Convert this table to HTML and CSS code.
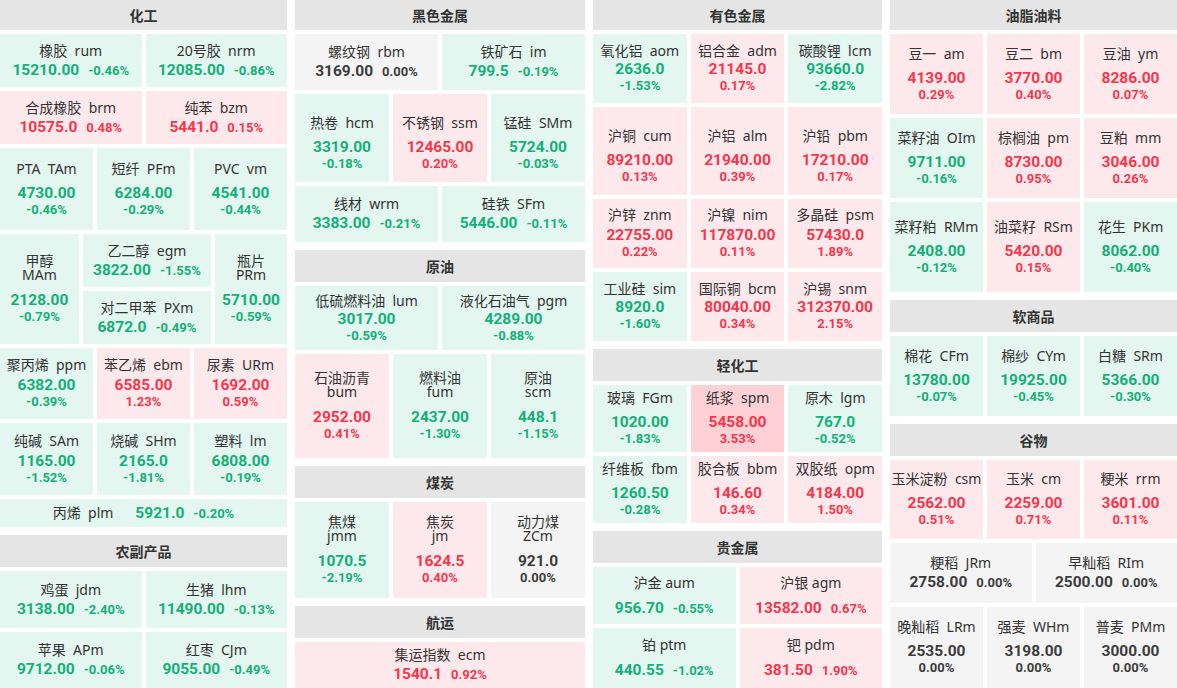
FILE: index.html
```html
<!DOCTYPE html>
<html lang="zh-CN">
<head>
<meta charset="utf-8">
<title>期货板块行情</title>
<link rel="stylesheet" href="styles.css">
</head>
<body>
<div class="board">

  <!-- Column 1 -->
  <div class="col">
    <section class="sec">
      <div class="hd first">化工</div>
      <div class="row h53">
        <div class="tile g w"><div class="nm">橡胶  rum</div><div class="vl"><span class="px">15210.00</span><span class="pc">-0.46%</span></div></div>
        <div class="tile g w"><div class="nm">20号胶  nrm</div><div class="vl"><span class="px">12085.00</span><span class="pc">-0.86%</span></div></div>
      </div>
      <div class="row h53">
        <div class="tile r w"><div class="nm">合成橡胶  brm</div><div class="vl"><span class="px">10575.0</span><span class="pc">0.48%</span></div></div>
        <div class="tile r w"><div class="nm">纯苯  bzm</div><div class="vl"><span class="px">5441.0</span><span class="pc">0.15%</span></div></div>
      </div>
      <div class="row h82">
        <div class="tile g sp"><div class="nm">PTA  TAm</div><div class="vl"><span class="px">4730.00</span><span class="pc">-0.46%</span></div></div>
        <div class="tile g sp"><div class="nm">短纤  PFm</div><div class="vl"><span class="px">6284.00</span><span class="pc">-0.29%</span></div></div>
        <div class="tile g sp"><div class="nm">PVC  vm</div><div class="vl"><span class="px">4541.00</span><span class="pc">-0.44%</span></div></div>
      </div>
      <div class="row h110">
        <div class="tile g sp two f77"><div class="nm">甲醇 MAm</div><div class="vl"><span class="px">2128.00</span><span class="pc">-0.79%</span></div></div>
        <div class="stack f132">
          <div class="tile g w"><div class="nm">乙二醇  egm</div><div class="vl"><span class="px">3822.00</span><span class="pc">-1.55%</span></div></div>
          <div class="tile g w"><div class="nm">对二甲苯  PXm</div><div class="vl"><span class="px">6872.0</span><span class="pc">-0.49%</span></div></div>
        </div>
        <div class="tile g sp two f70"><div class="nm">瓶片 PRm</div><div class="vl"><span class="px">5710.00</span><span class="pc">-0.59%</span></div></div>
      </div>
      <div class="row h71">
        <div class="tile g sm"><div class="nm">聚丙烯  ppm</div><div class="vl"><span class="px">6382.00</span><span class="pc">-0.39%</span></div></div>
        <div class="tile r sm"><div class="nm">苯乙烯  ebm</div><div class="vl"><span class="px">6585.00</span><span class="pc">1.23%</span></div></div>
        <div class="tile r sm"><div class="nm">尿素  URm</div><div class="vl"><span class="px">1692.00</span><span class="pc">0.59%</span></div></div>
      </div>
      <div class="row h72">
        <div class="tile g sm"><div class="nm">纯碱  SAm</div><div class="vl"><span class="px">1165.00</span><span class="pc">-1.52%</span></div></div>
        <div class="tile g sm"><div class="nm">烧碱  SHm</div><div class="vl"><span class="px">2165.0</span><span class="pc">-1.81%</span></div></div>
        <div class="tile g sm"><div class="nm">塑料  lm</div><div class="vl"><span class="px">6808.00</span><span class="pc">-0.19%</span></div></div>
      </div>
      <div class="row h28">
        <div class="tile g line"><div class="nm">丙烯  plm</div><div class="vl"><span class="px">5921.0</span><span class="pc">-0.20%</span></div></div>
      </div>
    </section>
    <section class="sec">
      <div class="hd">农副产品</div>
      <div class="row h57">
        <div class="tile g w"><div class="nm">鸡蛋  jdm</div><div class="vl"><span class="px">3138.00</span><span class="pc">-2.40%</span></div></div>
        <div class="tile g w"><div class="nm">生猪  lhm</div><div class="vl"><span class="px">11490.00</span><span class="pc">-0.13%</span></div></div>
      </div>
      <div class="row h56">
        <div class="tile g w"><div class="nm">苹果  APm</div><div class="vl"><span class="px">9712.00</span><span class="pc">-0.06%</span></div></div>
        <div class="tile g w"><div class="nm">红枣  CJm</div><div class="vl"><span class="px">9055.00</span><span class="pc">-0.49%</span></div></div>
      </div>
    </section>
  </div>

  <!-- Column 2 -->
  <div class="col">
    <section class="sec">
      <div class="hd first">黑色金属</div>
      <div class="row h56">
        <div class="tile n w"><div class="nm">螺纹钢  rbm</div><div class="vl"><span class="px">3169.00</span><span class="pc">0.00%</span></div></div>
        <div class="tile g w"><div class="nm">铁矿石  im</div><div class="vl"><span class="px">799.5</span><span class="pc">-0.19%</span></div></div>
      </div>
      <div class="row h88">
        <div class="tile g sp lo"><div class="nm">热卷  hcm</div><div class="vl"><span class="px">3319.00</span><span class="pc">-0.18%</span></div></div>
        <div class="tile r sp lo"><div class="nm">不锈钢  ssm</div><div class="vl"><span class="px">12465.00</span><span class="pc">0.20%</span></div></div>
        <div class="tile g sp lo"><div class="nm">锰硅  SMm</div><div class="vl"><span class="px">5724.00</span><span class="pc">-0.03%</span></div></div>
      </div>
      <div class="row h56">
        <div class="tile g w"><div class="nm">线材  wrm</div><div class="vl"><span class="px">3383.00</span><span class="pc">-0.21%</span></div></div>
        <div class="tile g w"><div class="nm">硅铁  SFm</div><div class="vl"><span class="px">5446.00</span><span class="pc">-0.11%</span></div></div>
      </div>
    </section>
    <section class="sec">
      <div class="hd">原油</div>
      <div class="row h64">
        <div class="tile g"><div class="nm">低硫燃料油  lum</div><div class="vl"><span class="px">3017.00</span><span class="pc">-0.59%</span></div></div>
        <div class="tile g"><div class="nm">液化石油气  pgm</div><div class="vl"><span class="px">4289.00</span><span class="pc">-0.88%</span></div></div>
      </div>
      <div class="row h104">
        <div class="tile r sp two"><div class="nm">石油沥青 bum</div><div class="vl"><span class="px">2952.00</span><span class="pc">0.41%</span></div></div>
        <div class="tile g sp two"><div class="nm">燃料油 fum</div><div class="vl"><span class="px">2437.00</span><span class="pc">-1.30%</span></div></div>
        <div class="tile g sp two"><div class="nm">原油 scm</div><div class="vl"><span class="px">448.1</span><span class="pc">-1.15%</span></div></div>
      </div>
    </section>
    <section class="sec">
      <div class="hd">煤炭</div>
      <div class="row h96">
        <div class="tile g sp two"><div class="nm">焦煤 jmm</div><div class="vl"><span class="px">1070.5</span><span class="pc">-2.19%</span></div></div>
        <div class="tile r sp two"><div class="nm">焦炭 jm</div><div class="vl"><span class="px">1624.5</span><span class="pc">0.40%</span></div></div>
        <div class="tile n sp two"><div class="nm">动力煤 ZCm</div><div class="vl"><span class="px">921.0</span><span class="pc">0.00%</span></div></div>
      </div>
    </section>
    <section class="sec">
      <div class="hd">航运</div>
      <div class="row h46">
        <div class="tile r w"><div class="nm">集运指数  ecm</div><div class="vl"><span class="px">1540.1</span><span class="pc">0.92%</span></div></div>
      </div>
    </section>
  </div>

  <!-- Column 3 -->
  <div class="col">
    <section class="sec">
      <div class="hd first">有色金属</div>
      <div class="row h69">
        <div class="tile g"><div class="nm">氧化铝  aom</div><div class="vl"><span class="px">2636.0</span><span class="pc">-1.53%</span></div></div>
        <div class="tile r"><div class="nm">铝合金  adm</div><div class="vl"><span class="px">21145.0</span><span class="pc">0.17%</span></div></div>
        <div class="tile g"><div class="nm">碳酸锂  lcm</div><div class="vl"><span class="px">93660.0</span><span class="pc">-2.82%</span></div></div>
      </div>
      <div class="row h88">
        <div class="tile r sp lo"><div class="nm">沪铜  cum</div><div class="vl"><span class="px">89210.00</span><span class="pc">0.13%</span></div></div>
        <div class="tile r sp lo"><div class="nm">沪铝  alm</div><div class="vl"><span class="px">21940.00</span><span class="pc">0.39%</span></div></div>
        <div class="tile r sp lo"><div class="nm">沪铅  pbm</div><div class="vl"><span class="px">17210.00</span><span class="pc">0.17%</span></div></div>
      </div>
      <div class="row h69">
        <div class="tile r sm"><div class="nm">沪锌  znm</div><div class="vl"><span class="px">22755.00</span><span class="pc">0.22%</span></div></div>
        <div class="tile r sm"><div class="nm">沪镍  nim</div><div class="vl"><span class="px">117870.00</span><span class="pc">0.11%</span></div></div>
        <div class="tile r sm"><div class="nm">多晶硅  psm</div><div class="vl"><span class="px">57430.0</span><span class="pc">1.89%</span></div></div>
      </div>
      <div class="row h69">
        <div class="tile g"><div class="nm">工业硅  sim</div><div class="vl"><span class="px">8920.0</span><span class="pc">-1.60%</span></div></div>
        <div class="tile r"><div class="nm">国际铜  bcm</div><div class="vl"><span class="px">80040.00</span><span class="pc">0.34%</span></div></div>
        <div class="tile r"><div class="nm">沪锡  snm</div><div class="vl"><span class="px">312370.00</span><span class="pc">2.15%</span></div></div>
      </div>
    </section>
    <section class="sec">
      <div class="hd">轻化工</div>
      <div class="row h67">
        <div class="tile g sp"><div class="nm">玻璃  FGm</div><div class="vl"><span class="px">1020.00</span><span class="pc">-1.83%</span></div></div>
        <div class="tile rr sp"><div class="nm">纸浆  spm</div><div class="vl"><span class="px">5458.00</span><span class="pc">3.53%</span></div></div>
        <div class="tile g sp"><div class="nm">原木  lgm</div><div class="vl"><span class="px">767.0</span><span class="pc">-0.52%</span></div></div>
      </div>
      <div class="row h67">
        <div class="tile g sp"><div class="nm">纤维板  fbm</div><div class="vl"><span class="px">1260.50</span><span class="pc">-0.28%</span></div></div>
        <div class="tile r sp"><div class="nm">胶合板  bbm</div><div class="vl"><span class="px">146.60</span><span class="pc">0.34%</span></div></div>
        <div class="tile r sp"><div class="nm">双胶纸  opm</div><div class="vl"><span class="px">4184.00</span><span class="pc">1.50%</span></div></div>
      </div>
    </section>
    <section class="sec">
      <div class="hd">贵金属</div>
      <div class="row h57">
        <div class="tile g w sp"><div class="nm">沪金 aum</div><div class="vl"><span class="px">956.70</span><span class="pc">-0.55%</span></div></div>
        <div class="tile r w sp"><div class="nm">沪银 agm</div><div class="vl"><span class="px">13582.00</span><span class="pc">0.67%</span></div></div>
      </div>
      <div class="row h60">
        <div class="tile g w sp"><div class="nm">铂 ptm</div><div class="vl"><span class="px">440.55</span><span class="pc">-1.02%</span></div></div>
        <div class="tile r w sp"><div class="nm">钯 pdm</div><div class="vl"><span class="px">381.50</span><span class="pc">1.90%</span></div></div>
      </div>
    </section>
  </div>

  <!-- Column 4 -->
  <div class="col">
    <section class="sec">
      <div class="hd first">油脂油料</div>
      <div class="row h80">
        <div class="tile r sp"><div class="nm">豆一  am</div><div class="vl"><span class="px">4139.00</span><span class="pc">0.29%</span></div></div>
        <div class="tile r sp"><div class="nm">豆二  bm</div><div class="vl"><span class="px">3770.00</span><span class="pc">0.40%</span></div></div>
        <div class="tile r sp"><div class="nm">豆油  ym</div><div class="vl"><span class="px">8286.00</span><span class="pc">0.07%</span></div></div>
      </div>
      <div class="row h80">
        <div class="tile g sp"><div class="nm">菜籽油  OIm</div><div class="vl"><span class="px">9711.00</span><span class="pc">-0.16%</span></div></div>
        <div class="tile r sp"><div class="nm">棕榈油  pm</div><div class="vl"><span class="px">8730.00</span><span class="pc">0.95%</span></div></div>
        <div class="tile r sp"><div class="nm">豆粕  mm</div><div class="vl"><span class="px">3046.00</span><span class="pc">0.26%</span></div></div>
      </div>
      <div class="row h90">
        <div class="tile g sp"><div class="nm">菜籽粕  RMm</div><div class="vl"><span class="px">2408.00</span><span class="pc">-0.12%</span></div></div>
        <div class="tile r sp"><div class="nm">油菜籽  RSm</div><div class="vl"><span class="px">5420.00</span><span class="pc">0.15%</span></div></div>
        <div class="tile g sp"><div class="nm">花生  PKm</div><div class="vl"><span class="px">8062.00</span><span class="pc">-0.40%</span></div></div>
      </div>
    </section>
    <section class="sec">
      <div class="hd">软商品</div>
      <div class="row h80">
        <div class="tile g sp"><div class="nm">棉花  CFm</div><div class="vl"><span class="px">13780.00</span><span class="pc">-0.07%</span></div></div>
        <div class="tile g sp"><div class="nm">棉纱  CYm</div><div class="vl"><span class="px">19925.00</span><span class="pc">-0.45%</span></div></div>
        <div class="tile g sp"><div class="nm">白糖  SRm</div><div class="vl"><span class="px">5366.00</span><span class="pc">-0.30%</span></div></div>
      </div>
    </section>
    <section class="sec">
      <div class="hd">谷物</div>
      <div class="row h79">
        <div class="tile r sp"><div class="nm">玉米淀粉  csm</div><div class="vl"><span class="px">2562.00</span><span class="pc">0.51%</span></div></div>
        <div class="tile r sp"><div class="nm">玉米  cm</div><div class="vl"><span class="px">2259.00</span><span class="pc">0.71%</span></div></div>
        <div class="tile r sp"><div class="nm">粳米  rrm</div><div class="vl"><span class="px">3601.00</span><span class="pc">0.11%</span></div></div>
      </div>
      <div class="row h60">
        <div class="tile n w"><div class="nm">粳稻  JRm</div><div class="vl"><span class="px">2758.00</span><span class="pc">0.00%</span></div></div>
        <div class="tile n w"><div class="nm">早籼稻  RIm</div><div class="vl"><span class="px">2500.00</span><span class="pc">0.00%</span></div></div>
      </div>
      <div class="row h81">
        <div class="tile n sp"><div class="nm">晚籼稻  LRm</div><div class="vl"><span class="px">2535.00</span><span class="pc">0.00%</span></div></div>
        <div class="tile n sp"><div class="nm">强麦  WHm</div><div class="vl"><span class="px">3198.00</span><span class="pc">0.00%</span></div></div>
        <div class="tile n sp"><div class="nm">普麦  PMm</div><div class="vl"><span class="px">3000.00</span><span class="pc">0.00%</span></div></div>
      </div>
    </section>
  </div>

</div>
</body>
</html>
```

FILE: styles.css
```css
* { box-sizing: border-box; }

html, body {
  margin: 0;
  padding: 0;
  background: #ffffff;
}

body {
  width: 1177px;
  height: 688px;
  overflow: hidden;
  font-family: "Noto Sans", "Noto Sans CJK SC", sans-serif;
  color: #333333;
}

.board {
  display: grid;
  grid-template-columns: 287px 290px 289px 287px;
  column-gap: 8px;
  height: 688px;
  overflow: hidden;
}

.col {
  display: flex;
  flex-direction: column;
  gap: 8px;
  min-width: 0;
}

.sec {
  display: flex;
  flex-direction: column;
  gap: 4px;
}

.hd {
  height: 32px;
  flex: none;
  background: #e5e5e5;
  display: flex;
  align-items: center;
  justify-content: center;
  font-size: 14px;
  font-weight: 700;
  color: #333333;
  font-family: "Noto Sans CJK SC", "Noto Sans", sans-serif;
}

.hd.first { height: 30px; }

.row {
  display: flex;
  gap: 4px;
  flex: none;
}

.stack {
  display: flex;
  flex-direction: column;
  gap: 4px;
  min-width: 0;
}

.stack .tile { flex: 1 1 0; }

.tile {
  flex: 1 1 0;
  min-width: 0;
  display: flex;
  flex-direction: column;
  align-items: center;
  justify-content: center;
  overflow: hidden;
  padding: 0 2px;
}

.f77 { flex: 77 1 0; }
.f132 { flex: 132 1 0; }
.f70 { flex: 70 1 0; }

.g { background: #e3f6ef; }
.r { background: #fde9ec; }
.rr { background: #fdd1d6; }
.n { background: #f4f4f4; }

.nm {
  font-size: 14px;
  line-height: 15px;
  color: #333333;
  white-space: pre;
  text-align: center;
  margin-bottom: 3px;
}

/* names that wrap onto two lines (narrow tiles) */
.two .nm {
  white-space: normal;
  word-break: keep-all;
  width: min-content;
  line-height: 14px;
}

.vl {
  display: flex;
  flex-direction: column;
  align-items: center;
  font-family: Roboto, "Noto Sans", sans-serif;
  font-weight: 700;
  white-space: nowrap;
}

.px {
  font-size: 15.5px;
  line-height: 17px;
}

.pc {
  font-size: 13px;
  line-height: 16px;
}

.g .vl { color: #13b079; }
.r .vl, .rr .vl { color: #f5364c; }
.n .vl { color: #3c3c3c; }

/* wide tiles: price and percent on one line */
.w .nm { margin-bottom: 3px; }
.w .vl {
  flex-direction: row;
  align-items: baseline;
}
.w .px { line-height: 18px; }
.w .pc { margin-left: 9px; }

/* spacing variants */
.sp .nm { margin-bottom: 9px; }
.sp.two .nm { margin-bottom: 10px; }
.sm .nm { margin-bottom: 5px; }
.lo { padding-top: 10px; }

/* single line tile */
.line {
  flex-direction: row;
  align-items: baseline;
  justify-content: center;
}
.line .nm { margin: 0 22px 0 0; line-height: 28px; }
.line .vl { flex-direction: row; align-items: baseline; }
.line .pc { margin-left: 9px; }

/* row heights (treemap sizes) */
.h28 { height: 28px; }
.h46 { height: 46px; }
.h53 { height: 53px; }
.h56 { height: 56px; }
.h57 { height: 57px; }
.h60 { height: 60px; }
.h64 { height: 64px; }
.h67 { height: 67px; }
.h69 { height: 69px; }
.h71 { height: 71px; }
.h72 { height: 72px; }
.h79 { height: 79px; }
.h80 { height: 80px; }
.h81 { height: 81px; }
.h82 { height: 82px; }
.h88 { height: 88px; }
.h90 { height: 90px; }
.h96 { height: 96px; }
.h104 { height: 104px; }
.h110 { height: 110px; }
```
